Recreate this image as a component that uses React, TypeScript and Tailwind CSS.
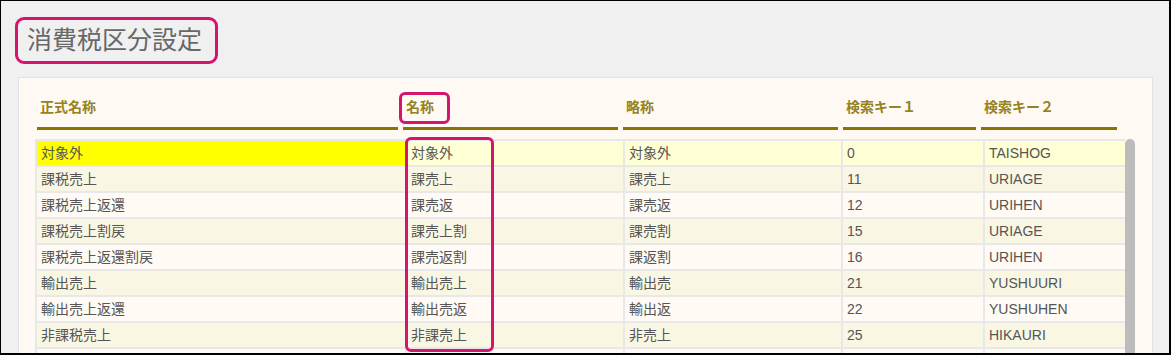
const ROWS = [
  ["対象外", "対象外", "対象外", "0", "TAISHOG"],
  ["課税売上", "課売上", "課売上", "11", "URIAGE"],
  ["課税売上返還", "課売返", "課売返", "12", "URIHEN"],
  ["課税売上割戻", "課売上割", "課売割", "15", "URIAGE"],
  ["課税売上返還割戻", "課売返割", "課返割", "16", "URIHEN"],
  ["輸出売上", "輸出売上", "輸出売", "21", "YUSHUURI"],
  ["輸出売上返還", "輸出売返", "輸出返", "22", "YUSHUHEN"],
  ["非課税売上", "非課売上", "非売上", "25", "HIKAURI"],
  ["", "", "", "", ""],
]

const HEADERS = ["正式名称", "名称", "略称", "検索キー１", "検索キー２"]

const FONT = "font-['Liberation_Sans','Noto_Sans_CJK_JP',sans-serif]"

export default function App() {
  return (
    <div
      className={`${FONT} relative w-[1171px] h-[355px] overflow-hidden bg-[#f0f0f0] border-black border-t border-l border-r-2 border-b-2 flex flex-col`}
    >
      {/* Title */}
      <div className="shrink-0 ml-[14px] mt-[16px] w-[203px] h-[47px] rounded-[9px] border-[3px] border-[#d5146e] flex items-center pl-[9px]">
        <h1 className="text-[25px] leading-none text-[#686868]">消費税区分設定</h1>
      </div>

      {/* Panel */}
      <div className="shrink-0 ml-[17px] mr-[16px] mt-[13px] h-[300px] bg-[#fefaf3] border border-[#e2e2e2] border-b-0 pl-[16px] pr-[16px] pt-[19px] flex flex-col">
        {/* Header */}
        <div className="shrink-0 ml-[2px] grid grid-cols-[361px_215px_215px_133px_136px] gap-x-[5px]">
          {HEADERS.map((h) => (
            <div key={h} className="pl-[3px] pb-[10px] border-b-[3px] border-[#8a7300] text-[14px] leading-[20px] font-bold text-[#96821e]">
              {h}
            </div>
          ))}
        </div>

        {/* Body */}
        <div className="shrink-0 mt-[9px] flex">
          <div className="w-[1090px] border-t-2 border-[#e8e8e8]">
            {ROWS.map((r, i) => {
              const bg = i === 0 ? "bg-[#ffffd6]" : i % 2 === 1 ? "bg-[#f9f7e4]" : "bg-[#fffaf3]"
              return (
                <div key={i} className={`grid grid-cols-[370px_218px_218px_142px_142px] h-[26px] ${bg}`}>
                  {r.map((c, j) => (
                    <div
                      key={j}
                      className={`flex items-center pl-[4px] border-l-2 border-b-2 border-[#e8e8e8] text-[14px] text-[#555555] ${
                        i === 0 && j === 0 ? "bg-[#ffff00]" : ""
                      }`}
                    >
                      {c}
                    </div>
                  ))}
                </div>
              )
            })}
          </div>
          <div className="w-[10px] h-[240px] rounded-t-full bg-[#bcbcbc]" />
        </div>
      </div>

      {/* Annotation boxes */}
      <div className="absolute left-[398px] top-[91px] w-[51px] h-[32px] rounded-[6px] border-[3px] border-[#d5146e]" />
      <div className="absolute left-[404px] top-[136px] w-[89px] h-[215px] rounded-[6px] border-[3px] border-[#d5146e]" />
    </div>
  )
}
